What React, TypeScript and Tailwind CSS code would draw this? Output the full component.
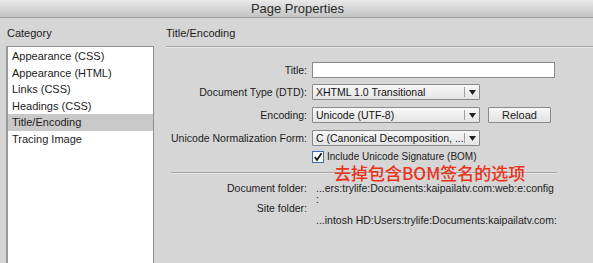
import React from "react";

const font = { fontFamily: '"Liberation Sans", "Noto Sans CJK SC", sans-serif' };

function Select({ text }: { text: string }) {
  return (
    <div className="flex h-[16px] w-[168px] items-stretch rounded-[1px] border border-[#8a8a8a] bg-gradient-to-b from-[#f8f8f8] to-[#e4e4e4]">
      <div className="flex-1 overflow-hidden whitespace-nowrap pl-[3px] text-[10.5px] leading-[14px] text-[#111]">{text}</div>
      <div className="my-[2px] w-px bg-[#a0a0a0]" />
      <div className="flex w-[14px] items-center justify-center">
        <svg width="7" height="5" viewBox="0 0 7 5"><path d="M0 0H7L3.5 5Z" fill="#222" /></svg>
      </div>
    </div>
  );
}

function Label({ children, h }: { children: React.ReactNode; h: string }) {
  return <div className={`flex ${h} items-start justify-end whitespace-nowrap leading-[16px]`}>{children}</div>;
}

export default function App() {
  const items = ["Appearance (CSS)", "Appearance (HTML)", "Links (CSS)", "Headings (CSS)", "Title/Encoding", "Tracing Image"];
  return (
    <div className="relative h-[263px] w-[593px] overflow-hidden bg-[#d6d6d6] text-[10.5px] text-[#1c1c1c]" style={font}>
      <div className="flex h-[18px] items-center justify-center border-b border-[#9c9c9c] bg-gradient-to-b from-[#e9e9e9] to-[#c4c4c4] pl-[2px] text-[13px] text-[#2c2c2c]">
        Page Properties
      </div>
      <div className="flex">
        <div className="w-[166px] shrink-0 pl-[6px]">
          <div className="flex h-[28px] items-center pl-[1px] pt-[2px] text-[11px]">Category</div>
          <div className="h-[230px] w-[148px] border border-l-[2px] border-[#8f8f8f] border-l-[#9a9a9a] bg-white pt-[1px]">
            {items.map((it) => (
              <div key={it} className={`h-[16.6px] pl-[4px] text-[11px] leading-[16.6px] ${it === "Title/Encoding" ? "bg-[#c9c9c9]" : ""}`}>{it}</div>
            ))}
          </div>
        </div>
        <div className="flex-1">
          <div className="flex h-[28px] items-center pt-[2px] text-[11px]">Title/Encoding</div>
          <div className="h-[2px] border-t border-b border-[#a8a8a8] border-b-[#e6e6e6]" />
          <div className="mt-[14px] grid grid-cols-[141px_1fr] gap-x-[5px]">
            <Label h="h-[22px]">Title:</Label>
            <div className="h-[22px]">
              <div className="h-[16px] w-[243px] border border-[#8a8a8a] bg-white" />
            </div>
            <Label h="h-[23px]">Document Type (DTD):</Label>
            <div className="h-[23px]">
              <Select text="XHTML 1.0 Transitional" />
            </div>
            <Label h="h-[23px]">Encoding:</Label>
            <div className="flex h-[23px] gap-[8px]">
              <Select text="Unicode (UTF-8)" />
              <div className="flex h-[16px] w-[63px] items-center justify-center rounded-[1px] border border-[#8a8a8a] bg-gradient-to-b from-[#f8f8f8] to-[#e2e2e2] text-[11px]">Reload</div>
            </div>
            <Label h="h-[21px]">Unicode Normalization Form:</Label>
            <div className="h-[21px]">
              <Select text="C (Canonical Decomposition, ..." />
            </div>
            <div />
            <div className="flex h-[12px] items-center gap-[3px]">
              <div className="flex h-[12px] w-[12px] items-center justify-center border border-[#3d6fae] bg-white">
                <svg width="10" height="10" viewBox="0 0 10 10"><path d="M1.8 5L4 8L8.5 1.2" stroke="#111" strokeWidth="1.7" fill="none" /></svg>
              </div>
              <span className="text-[10px] leading-[12px]">Include Unicode Signature (BOM)</span>
            </div>
          </div>
          <div className="ml-[5px] mt-[9px] h-[2px] w-[386px] border-t border-b border-[#a8a8a8] border-b-[#e6e6e6]" />
          <div className="mt-[9px] flex gap-[9px] leading-[11px]">
            <div className="flex w-[141px] flex-col items-end gap-[9px]">
              <div>Document folder:</div>
              <div>Site folder:</div>
            </div>
            <div className="flex flex-col text-[#222]">
              <div>...ers:trylife:Documents:kaipailatv.com:web:e:config</div>
              <div>:</div>
              <div className="mt-[10px]">...intosh HD:Users:trylife:Documents:kaipailatv.com:</div>
            </div>
          </div>
        </div>
      </div>
      <div className="absolute left-[334px] top-[164px] whitespace-nowrap text-[17px] font-medium leading-[18px] text-[#e8341c]" style={{ fontFamily: '"Noto Sans CJK SC", sans-serif' }}>
        去掉包含BOM签名的选项
      </div>
    </div>
  );
}
